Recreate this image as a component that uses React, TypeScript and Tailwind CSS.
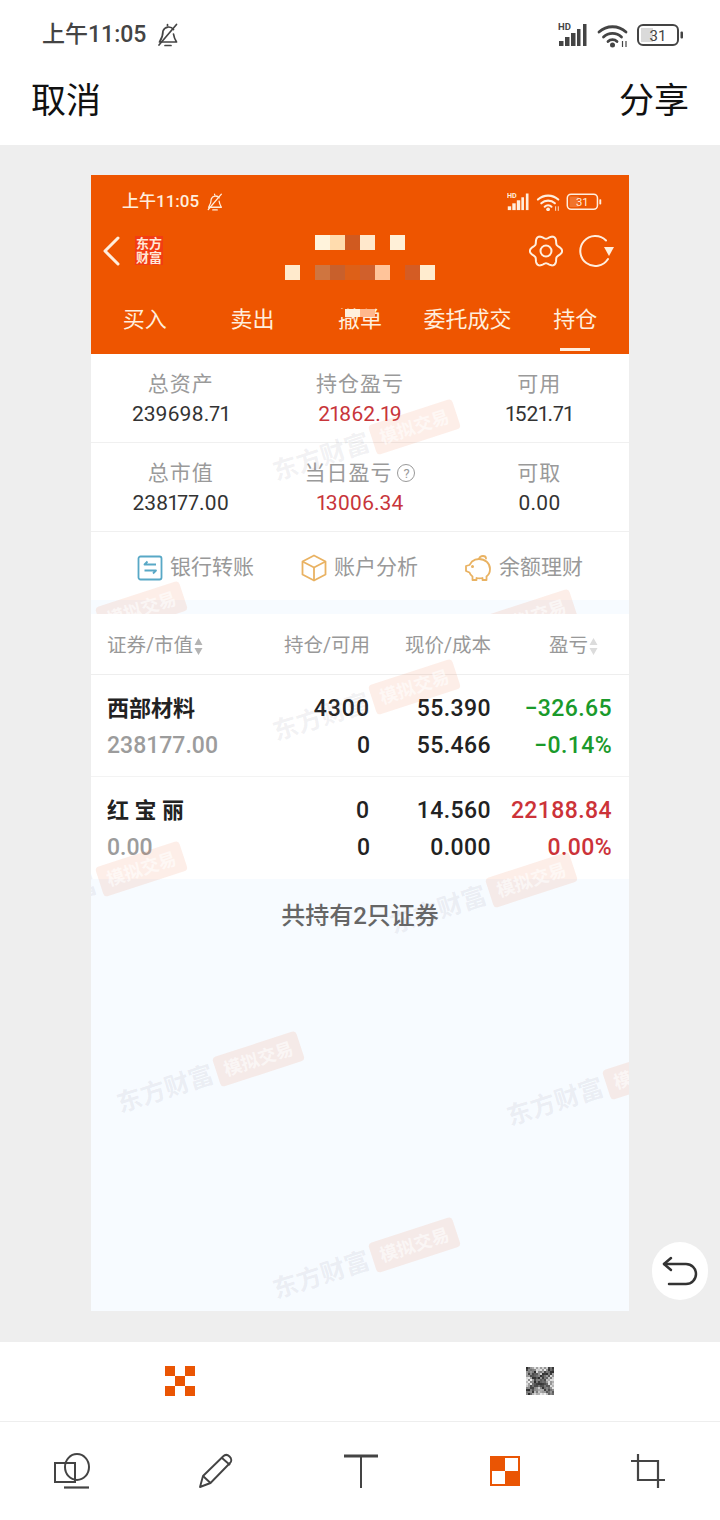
import clsx from 'clsx';

const CJK = "font-['Roboto','Noto_Sans_CJK_SC',sans-serif]";

const SUMMARY = [
  [
    { label: '总资产', value: '239698.71' },
    { label: '持仓盈亏', value: '21862.19', red: true },
    { label: '可用', value: '1521.71' },
  ],
  [
    { label: '总市值', value: '238177.00' },
    { label: '当日盈亏', value: '13006.34', red: true, help: true },
    { label: '可取', value: '0.00' },
  ],
];

const ROWS = [
  { name: '西部材料', worth: '238177.00', hold: '4300', free: '0', price: '55.390', cost: '55.466', gain: '-326.65', pct: '-0.14%', up: false },
  { name: '红 宝 丽', worth: '0.00', hold: '0', free: '0', price: '14.560', cost: '0.000', gain: '22188.84', pct: '0.00%', up: true },
];

const TITLE_1 = ['bg-[#fff3dc]', 'bg-[#ffdcae]', 'bg-[#d05a20]', 'bg-[#ffe8cc]', '', 'bg-[#fff0d8]'];
const TITLE_2 = ['bg-[#ffeacc]', '', 'bg-[#cf7540]', 'bg-[#c8602c]', 'bg-[#dd6018]', 'bg-[#d0602c]', 'bg-[#ffc49a]', '', 'bg-[#d45c24]', 'bg-[#ffeccf]'];

// positions are relative to the captured screen (91,175)
const MARKS = ['left-[274px] top-[268px]', 'left-[274px] top-[528px]', 'left-[1px] top-[710px]', 'left-[391px] top-[721px]', 'left-[118px] top-[900px]', 'left-[508px] top-[913px]', 'left-[274px] top-[1086px]'];

function Watermark({ className }: { className: string }) {
  return (
    <div className={clsx('absolute flex items-center gap-[4px] -translate-x-1/2 -translate-y-1/2 -rotate-[18deg] whitespace-nowrap', className)}>
      <span className="text-[25px] leading-[28px] font-bold text-[#77778a]/10">东方财富</span>
      <span className="rounded-[4px] bg-[#f05a22]/10 px-[8px] py-[4px] text-[18px] leading-[23px] font-bold text-white/60">模拟交易</span>
    </div>
  );
}

function BellOff({ size }: { size: number }) {
  return (
    <svg width={size} height={size} viewBox="0 0 24 24" fill="none" stroke="currentColor" strokeWidth="1.7" strokeLinecap="round" strokeLinejoin="round">
      <path d="M17.5 6.5A6 6 0 0 0 7 8c0 5-1.5 8-3.5 11h17c-1.6-2.6-2.6-5-3-8" />
      <path d="M11.5 1.5v1M9 22.5h6M20.5 1.5 3 22" />
    </svg>
  );
}

function StatusIcons({ width }: { width: number }) {
  return (
    <svg width={width} viewBox="0 0 126 26" fill="none">
      <text x="0" y="8" fontSize="9.5" fontWeight="700" fill="currentColor" fontFamily="Roboto, sans-serif">HD</text>
      <rect x="1" y="19" width="4.500" height="5" fill="currentColor" />
      <rect x="7" y="15" width="4.500" height="9" fill="currentColor" />
      <rect x="13" y="11" width="4.500" height="13" fill="currentColor" />
      <rect x="19" y="7" width="3.500" height="17" fill="currentColor" />
      <rect x="25" y="2" width="3.500" height="22" fill="currentColor" />
      <path d="M41 10a20 20 0 0 1 27 0M45.500 15a13 13 0 0 1 18 0M50 19.500a6.500 6.500 0 0 1 9 0" stroke="currentColor" strokeWidth="2.800" strokeLinecap="round" />
      <circle cx="54.500" cy="23" r="2.500" fill="currentColor" />
      <path d="M64.500 19v6M68 19v6" stroke="currentColor" strokeWidth="1.200" />
      <rect x="80" y="3" width="40" height="20" rx="5" stroke="currentColor" strokeWidth="2" />
      <rect x="83" y="6" width="12" height="14" fill="currentColor" opacity="0.2" />
      <rect x="122.500" y="9.500" width="2.500" height="7" rx="1" fill="currentColor" />
      <text x="100" y="19" fontSize="15" textAnchor="middle" fill="currentColor" fontFamily="Roboto, sans-serif">31</text>
    </svg>
  );
}

function gearPath() {
  const pts: string[] = [];
  for (let i = 0; i < 120; i++) {
    const a = (i / 120) * Math.PI * 2;
    const r = 14.2 + 1.9 * Math.cos(6 * a);
    pts.push(`${(17 + r * Math.cos(a)).toFixed(2)} ${(17 + r * Math.sin(a)).toFixed(2)}`);
  }
  return `M${pts.join('L')}Z`;
}

function Gear() {
  return (
    <svg width="34" height="34" viewBox="0 0 34 34" fill="none" stroke="#ffeedd" strokeWidth="2">
      <path d={gearPath()} strokeLinejoin="round" />
      <circle cx="17" cy="17" r="5.500" />
    </svg>
  );
}

function Refresh() {
  return (
    <svg width="37" height="34" viewBox="0 0 37 34" fill="none">
      <path d="M30 25a15 15 0 1 1-2-18.500" stroke="#ffeedd" strokeWidth="2" strokeLinecap="round" />
      <path d="M26 13h10L31 22z" fill="#ffeedd" />
    </svg>
  );
}

function TransferIcon() {
  return (
    <svg width="26" height="26" viewBox="0 0 26 26" fill="none" stroke="#58a8c6" strokeWidth="1.800">
      <rect x="1.500" y="1.500" width="23" height="23" rx="2" />
      <path d="M19 9.500H7.500l3-3M7.500 15.500H19l-3 3" strokeLinejoin="round" />
    </svg>
  );
}

function BoxIcon() {
  return (
    <svg width="26" height="28" viewBox="0 0 26 28" fill="none" stroke="#e9b262" strokeWidth="1.800" strokeLinejoin="round">
      <path d="M13 1.500 24.500 7.500v13L13 26.500 1.500 20.500v-13z" />
      <path d="M1.500 7.500 13 13.500 24.500 7.500M13 13.500v13" />
    </svg>
  );
}

function PiggyIcon() {
  return (
    <svg width="27" height="27" viewBox="0 0 27 27" fill="none" stroke="#e9b262" strokeWidth="1.800" strokeLinejoin="round" strokeLinecap="round">
      <path d="M7 6.500c2-1.700 4.500-2.500 7-2.500 6 0 11 4 11 10 0 3.500-1.500 6-3.500 7.500V25h-4v-2a12 12 0 0 1-6 0v2h-4v-3.500C6 20.500 5 19 4.500 17.500L1 16v-5l3.500-1z" />
      <path d="M14 4c.5-1.800 2-3 4-3 1.800 0 3 1.200 3 2.500" />
      <circle cx="7.500" cy="11.500" r=".6" fill="#e9b262" />
    </svg>
  );
}

function SortArrows({ light }: { light?: boolean }) {
  return (
    <svg width="9" height="19" viewBox="0 0 9 19" className={light ? 'text-[#dcdcdc]' : 'text-[#b4b4b4]'} fill="currentColor">
      <path d="M4.500 1 8.500 8h-8zM4.500 18l-4-7h8z" />
    </svg>
  );
}

function UndoIcon() {
  return (
    <svg width="36" height="30" viewBox="0 0 36 30" fill="none" stroke="#333" strokeWidth="2.500" strokeLinecap="round" strokeLinejoin="round">
      <path d="M9 2 2 8l7 6" />
      <path d="M2 8h22a10 10 0 0 1 0 20H7" />
    </svg>
  );
}

function MosaicOrange() {
  return (
    <div className="grid grid-cols-3 w-[30px] h-[30px] mb-[2px]">
      {[1, 0, 1, 0, 1, 0, 1, 0, 1].map((on, i) => (
        <div key={i} className={on ? 'bg-[#ea5504]' : ''} />
      ))}
    </div>
  );
}

function MosaicNoise() {
  const cells = [];
  for (let y = 0; y < 14; y++) {
    for (let x = 0; x < 14; x++) {
      const onLine = Math.abs(x - y) <= 2 || Math.abs(x + y - 13) <= 2;
      const v = (x * 47 + y * 91 + x * x * y * 13 + y * y * 29) % 100;
      const g = Math.round(onLine ? 45 + v * 1.1 : 120 + v * 1.2);
      cells.push(<rect key={`${x}-${y}`} x={x * 2} y={y * 2} width="2" height="2" fill={`rgb(${g},${g},${g})`} />);
    }
  }
  return (
    <svg width="28" height="28" viewBox="0 0 28 28" className="mb-[2px]">
      {cells}
    </svg>
  );
}

function ShapeTool() {
  return (
    <svg width="36" height="36" viewBox="0 0 36 36" fill="none" stroke="#444" strokeWidth="2" className="mr-[3px]">
      <rect x="1" y="10" width="20" height="19" />
      <ellipse cx="23" cy="14" rx="12" ry="13" />
      <path d="M10 34.500h25" strokeWidth="2.200" />
    </svg>
  );
}

function PenTool() {
  return (
    <svg width="36" height="36" viewBox="0 0 36 36" fill="none" stroke="#444" strokeWidth="1.900" strokeLinejoin="round" className="mr-[2px]">
      <path d="M2 34 5 23 25 3.500c2-2 4.500-2 6.500 0s2.500 4.500.5 6.500L12.500 30z" />
      <path d="M5 23l7.500 7M24 5l8 7" />
    </svg>
  );
}

function TextTool() {
  return (
    <svg width="36" height="34" viewBox="0 0 36 34" fill="none" stroke="#444">
      <path d="M1 2h34" strokeWidth="3" />
      <path d="M18 2v32" strokeWidth="2" />
    </svg>
  );
}

function MosaicTool() {
  return (
    <div className="grid grid-cols-2 w-[30px] h-[30px] border-2 border-[#ea5504] bg-[#ea5504]">
      <div />
      <div className="bg-white" />
      <div className="bg-white" />
      <div />
    </div>
  );
}

function CropTool() {
  return (
    <svg width="34" height="34" viewBox="0 0 34 34" fill="none" stroke="#444" strokeWidth="2.200">
      <path d="M7 0v26h27M0 7h27v27" />
    </svg>
  );
}

export default function App() {
  return (
    <div className={clsx('w-[720px] h-[1520px] bg-white flex flex-col overflow-hidden', CJK)}>
      {/* Editor header */}
      <div className="h-[145px] bg-white flex flex-col">
        <div className="h-[70px] flex items-center justify-between pl-[42px] pr-[36px] text-[#444]">
          <div className="flex items-center gap-[10px]">
            <span className="text-[23px] font-medium">上午11:05</span>
            <BellOff size={24} />
          </div>
          <StatusIcons width={126} />
        </div>
        <div className="h-[60px] flex items-center justify-between px-[31px] pt-[4px] text-[35px] text-[#111]">
          <span>取消</span>
          <span>分享</span>
        </div>
      </div>

      {/* Captured screenshot */}
      <div className="relative h-[1196px] bg-[#eeeeee] pt-[30px] pl-[91px]">
        <div className="relative w-[538px] h-[1136px] bg-[#f7fbff] overflow-hidden flex flex-col">
          <div className="bg-[#ee5500] h-[179px] flex flex-col text-[#ffeedd]">
            <div className="h-[53px] flex items-center justify-between pl-[31px] pr-[27px]">
              <div className="flex items-center gap-[7px]">
                <span className="text-[17px] font-medium">上午11:05</span>
                <BellOff size={18} />
              </div>
              <StatusIcons width={95} />
            </div>
            <div className="h-[59px] grid grid-cols-[1fr_auto_1fr] items-center">
              <div className="flex items-center pl-[11px] gap-[15px] pb-[14px]">
                <svg width="18" height="30" viewBox="0 0 18 30" fill="none" stroke="#ffeedd" strokeWidth="3" strokeLinecap="round" strokeLinejoin="round">
                  <path d="M16 2 3 15l13 13" />
                </svg>
                <div className="w-[28px] h-[29px] bg-[#f23c14] flex flex-col items-center justify-center text-[13px] leading-[14px] font-bold text-[#ffe8d8]">
                  <span>东方</span>
                  <span>财富</span>
                </div>
              </div>
              <div className="flex flex-col items-center gap-[15px]">
                <div className="flex">
                  {TITLE_1.map((c, i) => (
                    <div key={i} className={clsx('w-[15px] h-[15px]', c)} />
                  ))}
                </div>
                <div className="flex">
                  {TITLE_2.map((c, i) => (
                    <div key={i} className={clsx('w-[15px] h-[15px]', c)} />
                  ))}
                </div>
              </div>
              <div className="flex items-center justify-end gap-[15px] pr-[14px] pb-[14px]">
                <Gear />
                <Refresh />
              </div>
            </div>
            <div className="relative flex-1 grid grid-cols-5 text-[22px] text-center pt-[16px]">
              <span>买入</span>
              <span>卖出</span>
              <span>撤单</span>
              <span className="whitespace-nowrap">委托成交</span>
              <span className="relative">
                持仓
                <span className="absolute left-[39px] top-[45px] w-[30px] h-[3px] bg-[#ffeedd]" />
              </span>
              {/* mosaic patch over the 撤 character */}
              <div className="absolute left-[246px] top-[22px] flex h-[8px]">
                <div className="w-[8px] bg-[#ee5500]" />
                <div className="w-[15px] bg-[#fff0dc]" />
                <div className="w-[15px] bg-[#ffb78c]" />
              </div>
            </div>
          </div>

          {SUMMARY.map((row, i) => (
            <div key={i} className="h-[89px] grid grid-cols-3 bg-white border-b border-[#f0f0f0] text-center pt-[14px]">
              {row.map((cell) => (
                <div key={cell.label} className="flex flex-col items-center">
                  <div className="flex items-center gap-[5px] text-[21px] leading-[32px] text-[#9a9a9a] tracking-[1px]">
                    <span>{cell.label}</span>
                    {cell.help && (
                      <span className="w-[18px] h-[18px] rounded-full border border-[#999] flex items-center justify-center text-[13px] leading-none tracking-normal">?</span>
                    )}
                  </div>
                  <div className={clsx('text-[21px] leading-[28px] proportional-nums', cell.red ? 'text-[#c8353a]' : 'text-[#333]')}>{cell.value}</div>
                </div>
              ))}
            </div>
          ))}

          <div className="h-[68px] bg-white flex items-center justify-center gap-[47px] pt-[4px] text-[21px] text-[#999]">
            <div className="flex items-center gap-[7px]">
              <TransferIcon />
              <span>银行转账</span>
            </div>
            <div className="flex items-center gap-[7px]">
              <BoxIcon />
              <span>账户分析</span>
            </div>
            <div className="flex items-center gap-[7px]">
              <PiggyIcon />
              <span>余额理财</span>
            </div>
          </div>

          <div className="h-[14px] bg-[#f7fbff]" />

          <div className="h-[61px] bg-white border-b border-[#eeeeee] grid grid-cols-[163px_100px_121px_121px] pl-[16px] pt-[4px] items-center text-[19.5px] text-[#999]">
            <div className="flex items-center gap-[1px]">
              <span>证券/市值</span>
              <SortArrows />
            </div>
            <div className="text-right">持仓/可用</div>
            <div className="text-right">现价/成本</div>
            <div className="flex items-center justify-end gap-[1px] pr-[14px]">
              <span>盈亏</span>
              <SortArrows light />
            </div>
          </div>

          {ROWS.map((r, i) => (
            <div key={r.name} className={clsx('h-[102px] bg-white grid grid-cols-[163px_100px_121px_121px] pl-[16px] pt-[15px] text-[23px] leading-[37px] font-medium text-[#222] text-right', i === 0 && 'border-b border-[#f3f3f3]')}>
              <div className="text-left">
                <div className="text-[22px] font-bold">{r.name}</div>
                <div className="text-[#9c9c9c]">{r.worth}</div>
              </div>
              <div>
                <div className="tracking-[1px]">{r.hold}</div>
                <div>{r.free}</div>
              </div>
              <div>
                <div className="tracking-[0.4px]">{r.price}</div>
                <div className="tracking-[0.4px]">{r.cost}</div>
              </div>
              <div className={r.up ? 'text-[#cc3339]' : 'text-[#1a9a2b]'}>
                <div className="tracking-[0.4px]">{r.gain.replace('-', '−')}</div>
                <div className="tracking-[0.4px]">{r.pct.replace('-', '−')}</div>
              </div>
            </div>
          ))}

          <div className="text-center text-[24px] leading-[32px] font-medium text-[#666] pt-[21px]">共持有2只证券</div>

          {MARKS.map((m) => (
            <Watermark key={m} className={m} />
          ))}
          {/* these two only show down to the table header */}
          <div className="absolute left-0 top-0 w-full h-[439px] overflow-hidden">
            <Watermark className="left-[1px] top-[450px]" />
            <Watermark className="left-[391px] top-[458px]" />
          </div>
        </div>

        <button className="absolute left-[652px] top-[1097px] w-[56px] h-[58px] rounded-full bg-white flex items-center justify-center">
          <UndoIcon />
        </button>
      </div>

      {/* Editor toolbars */}
      <div className="h-[81px] bg-white border-t border-b border-[#eeeeee] grid grid-cols-2 items-center justify-items-center">
        <MosaicOrange />
        <MosaicNoise />
      </div>
      <div className="flex-1 grid grid-cols-5 items-center justify-items-center pl-[2px]">
        <ShapeTool />
        <PenTool />
        <TextTool />
        <MosaicTool />
        <CropTool />
      </div>
    </div>
  );
}
